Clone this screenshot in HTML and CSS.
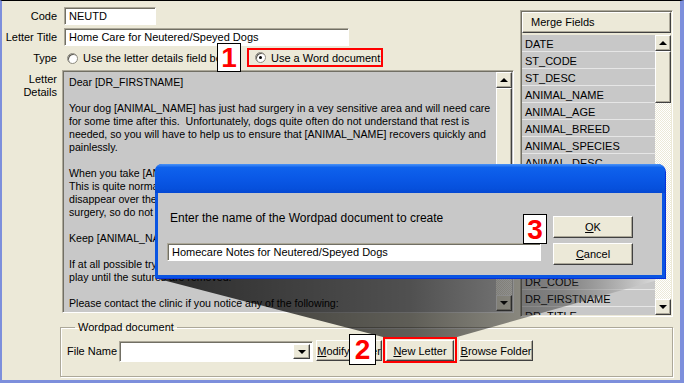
FILE: index.html
```html
<!DOCTYPE html>
<html lang="en">
<head>
  <meta charset="UTF-8">
  <meta name="viewport" content="width=device-width, initial-scale=1.0">
  <title>Letter Details</title>
  <link rel="stylesheet" href="styles.css">
</head>
<body>
  <div class="window">
    <div class="main">
      <!-- letter form -->
      <div class="form">
        <div class="lbl">Code</div>
        <div class="field"><div class="input code-input">NEUTD</div></div>

        <div class="lbl">Letter Title</div>
        <div class="field"><div class="input title-input">Home Care for Neutered/Speyed Dogs</div></div>

        <div class="lbl">Type</div>
        <div class="field type-field">
          <span class="option first"><span class="radio"></span><span class="opt-text">Use the letter details field below</span></span>
          <span class="option word"><span class="radio checked"></span>Use a Word document</span>
        </div>

        <div class="lbl details-lbl">Letter<br>Details</div>
        <div class="memo">
          <div class="memo-text">Dear [DR_FIRSTNAME]

Your dog [ANIMAL_NAME] has just had surgery in a vey sensitive area and will need care
for some time after this.  Unfortunately, dogs quite often do not understand that rest is
needed, so you will have to help us to ensure that [ANIMAL_NAME] recovers quickly and
painlessly.

When you take [ANIMAL_NAME] home you may notice some swelling around the wound.
This is quite normal and is caused by the body's reaction to the surgery.  It should
disappear over the next few days.  Some bruising may also be seen following the
surgery, so do not be alarmed if the area looks a little discoloured.

Keep [ANIMAL_NAME] quiet and restrict exercise to short walks on a lead.

If at all possible try to prevent [ANIMAL_NAME] from running, jumping or rough
play until the sutures are removed.

Please contact the clinic if you notice any of the following:</div>
          <div class="vscroll">
            <div class="sb-btn"><span class="tri-up"></span></div>
            <div class="sb-thumb memo-thumb"></div>
            <div class="sb-track"></div>
            <div class="sb-btn"><span class="tri-down"></span></div>
          </div>
        </div>
      </div>

      <!-- merge fields -->
      <div class="merge">
        <div class="merge-head">Merge Fields</div>
        <div class="merge-body">
          <ul class="merge-list">
            <li>DATE</li>
            <li>ST_CODE</li>
            <li>ST_DESC</li>
            <li>ANIMAL_NAME</li>
            <li>ANIMAL_AGE</li>
            <li>ANIMAL_BREED</li>
            <li>ANIMAL_SPECIES</li>
            <li>ANIMAL_DESC</li>
            <li>ANIMAL_SEX</li>
            <li>ANIMAL_COLOUR</li>
            <li>CLIENT_TITLE</li>
            <li>CLIENT_SURNAME</li>
            <li>CLIENT_ADDRESS</li>
            <li>CLIENT_PHONE</li>
            <li>DR_CODE</li>
            <li>DR_FIRSTNAME</li>
            <li>DR_TITLE</li>
          </ul>
          <div class="vscroll">
            <div class="sb-btn"><span class="tri-up"></span></div>
            <div class="sb-thumb merge-thumb"></div>
            <div class="sb-track"></div>
            <div class="sb-btn"><span class="tri-down"></span></div>
          </div>
        </div>
      </div>
    </div>

    <!-- wordpad document -->
    <fieldset class="group">
      <legend>Wordpad document</legend>
      <div class="group-row">
        <span class="file-lbl">File Name</span>
        <div class="combo"><span class="combo-btn"><span class="tri-down"></span></span></div>
        <button class="btn modify-btn"><u>M</u>odify Letter</button>
        <span class="red-box new-box"><button class="btn new-btn"><u>N</u>ew Letter</button></span>
        <button class="btn browse-btn"><u>B</u>rowse Folder</button>
      </div>
    </fieldset>

    <!-- callout wedge from the dialog to the button -->
    <svg class="wedge" width="678" height="379" viewBox="0 0 678 379">
      <defs>
        <linearGradient id="wedgeFill" gradientUnits="userSpaceOnUse" x1="153" y1="0" x2="663" y2="0">
          <stop offset="0" stop-color="#000" stop-opacity="0.78"/>
          <stop offset="0.5" stop-color="#000" stop-opacity="0.6"/>
          <stop offset="0.8" stop-color="#222" stop-opacity="0.42"/>
          <stop offset="1" stop-color="#fff" stop-opacity="0.55"/>
        </linearGradient>
      </defs>
      <polygon points="153,277 663,277 455,336 381,336" fill="url(#wedgeFill)"/>
    </svg>

    <!-- new document dialog -->
    <div class="dialog">
      <div class="dlg-title"></div>
      <div class="dlg-body">
        <div class="dlg-left">
          <div class="dlg-text">Enter the name of the Wordpad document to create</div>
          <div class="input dlg-input">Homecare Notes for Neutered/Speyed Dogs</div>
        </div>
        <div class="dlg-right">
          <button class="btn dlg-btn"><u>O</u>K</button>
          <button class="btn dlg-btn"><u>C</u>ancel</button>
        </div>
      </div>
    </div>

    <div class="callout n1">1</div>
    <div class="callout n2">2</div>
    <div class="callout n3">3</div>
  </div>
</body>
</html>
```

FILE: styles.css
```css
/* window */
body {
  margin: 0;
  background: #ece9d8;
}

.window {
  position: relative;
  width: 684px;
  height: 383px;
  box-sizing: border-box;
  background: #ece9d8;
  border-top: 1px solid #000;
  border-left: 2px solid #7d8fdc;
  border-right: 4px solid #7d8fdc;
  border-bottom: 3px solid #7d8fdc;
  font: 11px "Liberation Sans", Arial, sans-serif;
  color: #000;
  overflow: hidden;
}

.main {
  display: flex;
  align-items: flex-start;
  padding-top: 6px;
}

/* form */
.form {
  display: grid;
  grid-template-columns: 60px 452px;
  grid-template-rows: 18px 18px 18px 243px;
  row-gap: 3px;
  width: 512px;
}

.lbl {
  text-align: right;
  padding-right: 5px;
  align-self: center;
  line-height: 13px;
}

.details-lbl {
  align-self: start;
  padding-top: 3px;
  line-height: 13px;
}

.field {
  display: flex;
  align-items: center;
}

.input {
  box-sizing: border-box;
  height: 18px;
  background: #fff;
  border: 1px solid;
  border-color: #aca899 #fff #fff #aca899;
  box-shadow: inset 1px 1px #716f64;
  padding: 0 0 0 4px;
  line-height: 16px;
  white-space: nowrap;
  overflow: hidden;
}

.code-input {
  margin-left: 2px;
  width: 92px;
}

.title-input {
  margin-left: 2px;
  width: 285px;
}

.type-field {
  align-items: stretch;
}

.option {
  display: flex;
  align-items: center;
  gap: 5px;
}

.option.first {
  margin-left: 5px;
  width: 180px;
  overflow: hidden;
  white-space: nowrap;
}

.option.word {
  box-sizing: border-box;
  margin-top: -1px;
  height: 19px;
  width: 136px;
  border: 2px solid #f00;
  padding-left: 6px;
}

.radio {
  position: relative;
  flex: none;
  width: 11px;
  height: 11px;
  box-sizing: border-box;
  border-radius: 50%;
  background: #fff;
  border: 1px solid #8d8b80;
  box-shadow: inset 1px 1px #5f5d55;
}

.radio.checked::after {
  content: "";
  position: absolute;
  left: 3px;
  top: 3px;
  width: 3px;
  height: 3px;
  border-radius: 50%;
  background: #000;
}

/* letter details memo */
.memo {
  display: flex;
  box-sizing: border-box;
  background: #c8c8c8;
  border: 1px solid;
  border-color: #aca899 #fff #fff #aca899;
  box-shadow: inset 1px 1px #716f64;
  padding: 1px;
}

.memo-text {
  flex: 1;
  padding: 4px 0 0 5px;
  font-size: 10.6px;
  white-space: pre;
  line-height: 13px;
  overflow: hidden;
}

/* scrollbars */
.vscroll {
  display: flex;
  flex-direction: column;
  width: 16px;
  flex: none;
}

.sb-btn {
  box-sizing: border-box;
  height: 16px;
  flex: none;
  display: flex;
  align-items: center;
  justify-content: center;
  background: #ece9d8;
  border: 1px solid;
  border-color: #fff #404040 #404040 #fff;
  box-shadow: inset -1px -1px #aca899;
}

.tri-up,
.tri-down {
  width: 0;
  height: 0;
  border-left: 4px solid transparent;
  border-right: 4px solid transparent;
}

.tri-up {
  border-bottom: 4px solid #000;
}

.tri-down {
  border-top: 4px solid #000;
}

.sb-thumb {
  box-sizing: border-box;
  flex: none;
  background: #ece9d8;
  border: 1px solid;
  border-color: #fff #404040 #404040 #fff;
  box-shadow: inset -1px -1px #aca899;
}

.memo-thumb {
  height: 170px;
}

.merge-thumb {
  height: 52px;
}

.sb-track {
  flex: 1;
  background: repeating-conic-gradient(#fff 0 25%, #ece9d8 0 50%) 0 0 / 2px 2px;
}

/* merge fields */
.merge {
  box-sizing: border-box;
  margin: 3px 0 0 6px;
  width: 153px;
  height: 307px;
  display: flex;
  flex-direction: column;
  border: 1px solid;
  border-color: #aca899 #fff #fff #aca899;
  box-shadow: inset 1px 1px #716f64;
  padding: 1px;
}

.merge-head {
  box-sizing: border-box;
  height: 21px;
  flex: none;
  padding-left: 8px;
  line-height: 19px;
  background: #ece9d8;
  border: 1px solid;
  border-color: #fff #404040 #404040 #fff;
  box-shadow: inset -1px -1px #aca899;
}

.merge-body {
  flex: 1;
  display: flex;
  margin-top: 2px;
  overflow: hidden;
}

.merge-list {
  flex: 1;
  margin: 0;
  padding: 0;
  list-style: none;
  background: #c8c8c8;
  overflow: hidden;
}

.merge-list li {
  height: 16px;
  line-height: 18px;
  padding-left: 3px;
  border-bottom: 1px solid #e6e6e6;
}

/* wordpad group */
.group {
  box-sizing: border-box;
  margin: 4px 0 0 58px;
  width: 613px;
  height: 56px;
  padding: 0 0 0 6px;
  border: 1px solid #aca899;
  box-shadow: 1px 1px #fff, inset 1px 1px #fff;
  min-width: 0;
}

.group legend {
  margin-left: 8px;
  padding: 0 3px;
  line-height: 13px;
}

.group-row {
  display: flex;
  align-items: flex-start;
  margin-top: 3px;
}

.file-lbl {
  width: 52px;
  margin-top: 8px;
  line-height: 13px;
}

.combo {
  box-sizing: border-box;
  width: 194px;
  height: 21px;
  margin-top: 4px;
  display: flex;
  justify-content: flex-end;
  padding: 2px;
  background: #fff;
  border: 1px solid;
  border-color: #aca899 #fff #fff #aca899;
  box-shadow: inset 1px 1px #716f64;
}

.combo-btn {
  box-sizing: border-box;
  width: 17px;
  display: flex;
  align-items: center;
  justify-content: center;
  background: #ece9d8;
  border: 1px solid;
  border-color: #fff #404040 #404040 #fff;
  box-shadow: inset -1px -1px #aca899;
}

.btn {
  box-sizing: border-box;
  height: 21px;
  padding: 0;
  background: #ece9d8;
  border: 1px solid;
  border-color: #fff #404040 #404040 #fff;
  box-shadow: inset -1px -1px #aca899;
  font: inherit;
  color: #000;
  white-space: nowrap;
}

.modify-btn {
  margin: 3px 0 0 3px;
  width: 66px;
}

.red-box {
  box-sizing: border-box;
  border: 2px solid #f00;
}

.new-box {
  margin-left: 1px;
  width: 74px;
  height: 26px;
  padding: 1px;
}

.new-btn {
  width: 100%;
}

.browse-btn {
  margin: 3px 0 0 2px;
  width: 74px;
}

/* callout wedge */
.wedge {
  position: absolute;
  left: 0;
  top: 0;
  pointer-events: none;
}

/* dialog */
.dialog {
  position: absolute;
  left: 153px;
  top: 163px;
  width: 510px;
  height: 114px;
  display: flex;
  flex-direction: column;
  border-radius: 7px 7px 0 0;
  background: #0a55e2;
  box-shadow: 1px 1px 0 #0831d9;
}

.dlg-title {
  height: 29px;
  flex: none;
  border-radius: 7px 7px 0 0;
  background: linear-gradient(#4a93f7 0, #0f62ec 12%, #0a58e6 50%, #0650dc 85%, #0448d2 100%);
}

.dlg-body {
  flex: 1;
  display: flex;
  margin: 0 3px 3px 3px;
  padding: 19px 0 0 9px;
  background: #c8c8c8;
}

.dlg-left {
  width: 374px;
  display: flex;
  flex-direction: column;
}

.dlg-text {
  padding-left: 3px;
  font-size: 12px;
  line-height: 13px;
}

.dlg-input {
  margin-top: 18px;
  height: 18px;
  padding-left: 4px;
}

.dlg-right {
  margin: 4px 0 0 12px;
  display: flex;
  flex-direction: column;
  gap: 5px;
}

.dlg-btn {
  width: 80px;
  height: 22px;
}

/* numbered callouts */
.callout {
  position: absolute;
  box-sizing: border-box;
  background: #fff;
  border: 1px solid #000;
  color: #f00;
  font: bold 28px "Liberation Sans", Arial, sans-serif;
  text-align: center;
}

.n1 {
  left: 215px;
  top: 42px;
  width: 24px;
  height: 29px;
  line-height: 28px;
}

.n2 {
  left: 347px;
  top: 333px;
  width: 27px;
  height: 31px;
  line-height: 30px;
}

.n3 {
  left: 521px;
  top: 213px;
  width: 24px;
  height: 30px;
  line-height: 29px;
}
```
